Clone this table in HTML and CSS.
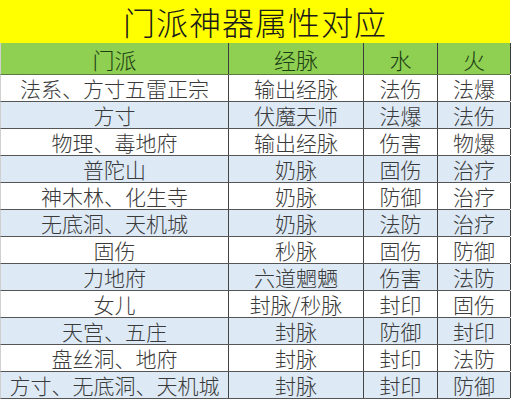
FILE: index.html
```html
<!DOCTYPE html>
<html lang="zh-CN">
<head>
<meta charset="utf-8">
<title>门派神器属性对应</title>
<link rel="stylesheet" href="styles.css">
</head>
<body>
<div class="sheet">
  <div class="title">门派神器属性对应</div>
  <div class="row head">
    <div class="cell">门派</div>
    <div class="cell">经脉</div>
    <div class="cell">水</div>
    <div class="cell">火</div>
  </div>
  <div class="row">
    <div class="cell">法系、方寸五雷正宗</div>
    <div class="cell">输出经脉</div>
    <div class="cell">法伤</div>
    <div class="cell">法爆</div>
  </div>
  <div class="row alt">
    <div class="cell">方寸</div>
    <div class="cell">伏魔天师</div>
    <div class="cell">法爆</div>
    <div class="cell">法伤</div>
  </div>
  <div class="row">
    <div class="cell">物理、毒地府</div>
    <div class="cell">输出经脉</div>
    <div class="cell">伤害</div>
    <div class="cell">物爆</div>
  </div>
  <div class="row alt">
    <div class="cell">普陀山</div>
    <div class="cell">奶脉</div>
    <div class="cell">固伤</div>
    <div class="cell">治疗</div>
  </div>
  <div class="row">
    <div class="cell">神木林、化生寺</div>
    <div class="cell">奶脉</div>
    <div class="cell">防御</div>
    <div class="cell">治疗</div>
  </div>
  <div class="row alt">
    <div class="cell">无底洞、天机城</div>
    <div class="cell">奶脉</div>
    <div class="cell">法防</div>
    <div class="cell">治疗</div>
  </div>
  <div class="row">
    <div class="cell">固伤</div>
    <div class="cell">秒脉</div>
    <div class="cell">固伤</div>
    <div class="cell">防御</div>
  </div>
  <div class="row alt">
    <div class="cell">力地府</div>
    <div class="cell">六道魍魉</div>
    <div class="cell">伤害</div>
    <div class="cell">法防</div>
  </div>
  <div class="row">
    <div class="cell">女儿</div>
    <div class="cell">封脉/秒脉</div>
    <div class="cell">封印</div>
    <div class="cell">固伤</div>
  </div>
  <div class="row alt">
    <div class="cell">天宫、五庄</div>
    <div class="cell">封脉</div>
    <div class="cell">防御</div>
    <div class="cell">封印</div>
  </div>
  <div class="row">
    <div class="cell">盘丝洞、地府</div>
    <div class="cell">封脉</div>
    <div class="cell">封印</div>
    <div class="cell">法防</div>
  </div>
  <div class="row alt">
    <div class="cell">方寸、无底洞、天机城</div>
    <div class="cell">封脉</div>
    <div class="cell">封印</div>
    <div class="cell">防御</div>
  </div>
</div>
</body>
</html>
```

FILE: styles.css
```css
html, body {
  margin: 0;
  padding: 0;
  background: #ffffff;
}

body {
  font-family: "Noto Sans CJK SC", "Noto Sans", sans-serif;
  font-weight: 300;
  color: #3a3a3a;
}

.sheet {
  width: 510px;
}

.title {
  height: 43px;
  background: #ffff00;
  color: #1a1a1a;
  font-size: 32px;
  line-height: 43px;
  text-align: center;
  letter-spacing: 1px;
  overflow: hidden;
}

.row {
  display: grid;
  grid-template-columns: 228px 135px 74px 73px;
  height: 27px;
  box-sizing: border-box;
  border-bottom: 1px solid #555555;
  background: #ffffff;
  border-left: 1px solid #d0d0d0;
}

.row.alt {
  background: #dde9f5;
}

.row.head {
  height: 32px;
  background: #8fcf52;
  color: #1c3e14;
  border-bottom: 1px solid #5a7a40;
}

.cell {
  box-sizing: border-box;
  border-right: 1px solid #444444;
  display: flex;
  align-items: center;
  justify-content: center;
  font-size: 21px;
  line-height: 1;
  white-space: nowrap;
}

.head .cell {
  font-size: 22px;
  border-right-color: #3c3c3c;
}
```
